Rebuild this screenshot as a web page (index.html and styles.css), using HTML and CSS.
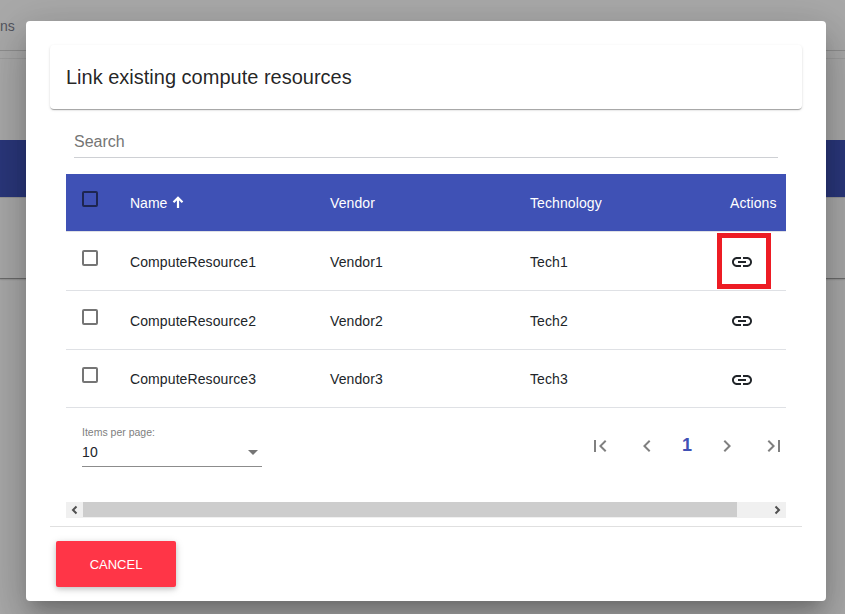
FILE: index.html
```html
<!DOCTYPE html>
<html lang="en">
<head>
<meta charset="utf-8">
<title>Compute resources</title>
<link rel="stylesheet" href="styles.css">
</head>
<body>
<svg class="sprite" aria-hidden="true">
  <symbol id="link" viewBox="0 0 24 24"><path d="M3.9 12c0-1.71 1.39-3.1 3.1-3.1h4V7H7c-2.76 0-5 2.24-5 5s2.24 5 5 5h4v-1.9H7c-1.71 0-3.1-1.39-3.1-3.1zM8 13h8v-2H8v2zm9-6h-4v1.9h4c1.71 0 3.1 1.39 3.1 3.1s-1.39 3.1-3.1 3.1h-4V17h4c2.76 0 5-2.24 5-5s-2.24-5-5-5z"/></symbol>
  <symbol id="first" viewBox="0 0 24 24"><path d="M18.41 16.59L13.82 12l4.59-4.59L17 6l-6 6 6 6zM6 6h2v12H6z"/></symbol>
  <symbol id="prev" viewBox="0 0 24 24"><path d="M15.41 7.41L14 6l-6 6 6 6 1.41-1.41L10.83 12z"/></symbol>
  <symbol id="next" viewBox="0 0 24 24"><path d="M10 6L8.59 7.41 13.17 12l-4.58 4.59L10 18l6-6z"/></symbol>
  <symbol id="last" viewBox="0 0 24 24"><path d="M5.59 7.41L10.18 12l-4.59 4.59L7 18l6-6-6-6zM16 6h2v12h-2z"/></symbol>
</svg>
<div class="page">
  <header class="page-nav">ns</header>
  <div class="page-toolbar"></div>
  <div class="page-card">
    <div class="page-search"></div>
    <div class="page-head"></div>
    <div class="page-row"></div>
  </div>
</div>
<div class="backdrop">
  <section class="dialog" role="dialog">
    <h1 class="title">Link existing compute resources</h1>
    <div class="content">
      <div class="search">Search</div>
      <div class="table">
        <div class="row head">
          <span class="check"></span>
          <span class="name">Name <svg class="sort" viewBox="0 0 12 12"><path d="M6 12V2M1.5 6.2L6 1.7l4.5 4.5"/></svg></span>
          <span>Vendor</span><span>Technology</span><span class="actions">Actions</span>
        </div>
        <div class="row">
          <span class="check"></span><span>ComputeResource1</span><span>Vendor1</span><span>Tech1</span>
          <span class="action"><svg class="icon"><use href="#link"/></svg><i class="highlight"></i></span>
        </div>
        <div class="row">
          <span class="check"></span><span>ComputeResource2</span><span>Vendor2</span><span>Tech2</span>
          <span class="action"><svg class="icon"><use href="#link"/></svg></span>
        </div>
        <div class="row last">
          <span class="check"></span><span>ComputeResource3</span><span>Vendor3</span><span>Tech3</span>
          <span class="action"><svg class="icon"><use href="#link"/></svg></span>
        </div>
      </div>
      <div class="paginator">
        <div class="size">
          <div class="size-label">Items per page:</div>
          <div class="select">10<span class="caret"></span></div>
        </div>
        <nav class="pages">
          <svg class="icon"><use href="#first"/></svg>
          <svg class="icon"><use href="#prev"/></svg>
          <b class="current">1</b>
          <svg class="icon"><use href="#next"/></svg>
          <svg class="icon"><use href="#last"/></svg>
        </nav>
      </div>
      <div class="scrollbar">
        <svg class="arrow" viewBox="0 0 17 16"><path d="M10.5 4.5L7 8l3.5 3.5"/></svg>
        <div class="thumb"></div>
        <svg class="arrow" viewBox="0 0 17 16"><path d="M6.5 4.5L10 8l-3.5 3.5"/></svg>
      </div>
    </div>
    <footer class="footer"><button class="cancel">CANCEL</button></footer>
  </section>
</div>
</body>
</html>
```
FILE: styles.css
```css
* { box-sizing: border-box; }
body {
  margin: 0;
  height: 614px;
  overflow: hidden;
  position: relative;
  font-family: "Liberation Sans", Arial, sans-serif;
  font-size: 14px;
  color: #212529;
  background: #fafafa;
}
.sprite { display: none; }
.icon { width: 24px; height: 24px; display: block; fill: currentColor; }

.page-nav { height: 51px; padding-top: 18px; border-bottom: 1px solid #d2d2d2; color: #7a7e8c; line-height: 16px; }
.page-toolbar { height: 8px; border-bottom: 1px solid #e8e8e8; }
.page-card { height: 219px; box-shadow: 0 1px 1px rgba(0,0,0,.3), 0 2px 2px rgba(0,0,0,.1); }
.page-search { height: 81px; }
.page-head { height: 57px; background: #3f51b5; }
.page-row { height: 81px; border-top: 1px solid #dedede; }

.backdrop {
  position: absolute;
  inset: 0;
  padding: 21px 19px 13px 26px;
  background: rgba(0,0,0,.32);
}
.dialog {
  height: 580px;
  padding: 24px;
  border-radius: 4px;
  background: #fff;
  box-shadow: 0 11px 15px -7px rgba(0,0,0,.2), 0 24px 38px 3px rgba(0,0,0,.14), 0 9px 46px 8px rgba(0,0,0,.12);
}
.title {
  margin: 0;
  height: 64px;
  padding: 0 16px;
  border-radius: 4px;
  font-size: 20px;
  font-weight: 400;
  line-height: 64px;
  color: rgba(0,0,0,.87);
  box-shadow: 0 2px 1px -1px rgba(0,0,0,.2), 0 1px 1px rgba(0,0,0,.14), 0 1px 3px rgba(0,0,0,.12);
}
.content { padding: 24px 16px 8px; border-bottom: 1px solid #e0e0e0; }
.search {
  height: 25px;
  margin: 0 8px 16px;
  border-bottom: 1px solid #ced0d4;
  font-size: 16px;
  line-height: 18px;
  color: #757575;
}

.row {
  height: 59px;
  display: grid;
  grid-template-columns: 48px 200px 200px 199px 57px;
  padding: 2px 0 0 16px;
  align-items: center;
  border-bottom: 1px solid #dfe1e5;
  line-height: 16px;
  letter-spacing: .1px;
}
.row.head { height: 58px; padding-top: 0; background: #3f51b5; background-clip: padding-box; color: #fff; }
.row.last { height: 58px; padding-top: 1px; }
.check { width: 16px; height: 16px; margin-bottom: 9px; border: 2px solid #757575; border-radius: 2px; }
.head .check { margin-bottom: 7px; border-color: #1d2550; }
.last .check { margin-bottom: 8px; }
.name { display: flex; align-items: center; letter-spacing: 0; }
.actions { padding-left: 1px; }
.sort { width: 12px; height: 12px; margin: -1px 0 0 5px; fill: none; stroke: #fff; stroke-width: 2.2; }
.action { position: relative; padding-left: 1px; }
.last .action { padding-top: 1px; }
.highlight { position: absolute; left: -12px; top: -17px; width: 54px; height: 56px; border: 5px solid #ed1c24; }

.paginator { height: 94px; display: flex; justify-content: space-between; padding: 18px 0 0 16px; }
.size { width: 180px; }
.size-label { font-size: 10.5px; line-height: 12px; color: #808080; }
.select {
  height: 29px;
  display: flex;
  justify-content: space-between;
  padding: 6px 4px 0 0;
  border-bottom: 1px solid #8c8c8c;
  line-height: 17px;
  letter-spacing: .2px;
}
.caret { margin-top: 6px; width: 10px; height: 5px; background: #757575; clip-path: polygon(0 0, 100% 0, 50% 100%); }
.pages { height: 24px; margin-top: 8px; display: grid; grid-template-columns: 47px 46px 34px 47px 24px; color: #808080; }
.current { font-size: 18px; line-height: 22px; text-align: left; padding-left: 1px; color: #3f51b5; }

.scrollbar { height: 16px; display: flex; background: #f0f0f0; }
.arrow { width: 17px; height: 16px; fill: none; stroke: #505050; stroke-width: 2; }
.thumb { width: 654px; height: 15px; margin-right: 32px; background: #cdcdcd; }
.footer { padding: 14px 6px; }
.cancel {
  display: block;
  width: 120px;
  height: 46px;
  padding: 0;
  border: 0;
  border-radius: 2px;
  background: #ff3547;
  color: #fff;
  font-family: inherit;
  font-size: 13px;
  box-shadow: 0 2px 5px rgba(0,0,0,.16), 0 2px 10px rgba(0,0,0,.12);
}
```
